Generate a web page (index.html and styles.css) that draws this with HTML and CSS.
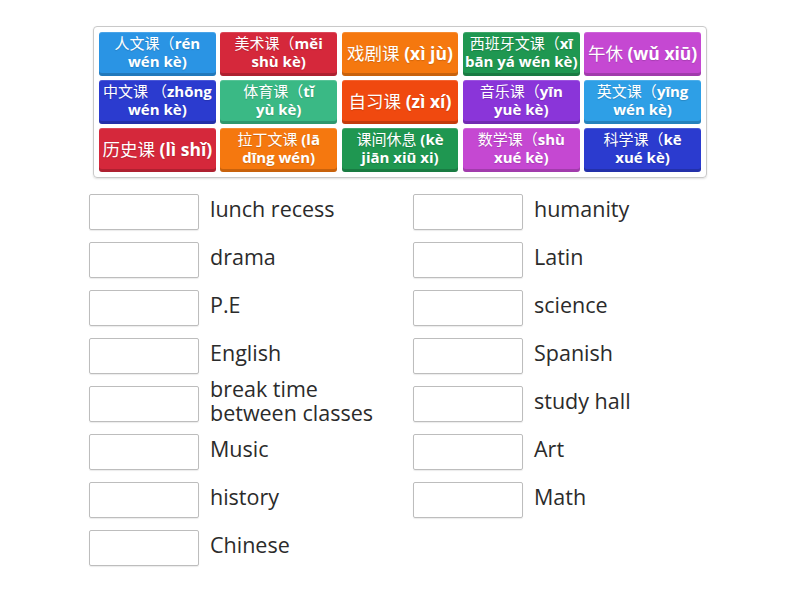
FILE: index.html
```html
<!DOCTYPE html>
<html>
<head>
<meta charset="utf-8">
<link rel="stylesheet" href="styles.css">
</head>
<body>
<div class="page">
  <div class="bank">
    <div class="tile c-blue"><span class="t"><span class="zh">人文课（</span>rén<br>wén kè)</span></div>
    <div class="tile c-red"><span class="t"><span class="zh">美术课（</span>měi<br>shù kè)</span></div>
    <div class="tile c-orange big"><span class="t"><span class="zh">戏剧课</span> (xì jù)</span></div>
    <div class="tile c-green"><span class="t"><span class="zh">西班牙文课（</span>xī<br>bān yá wén kè)</span></div>
    <div class="tile c-magenta big"><span class="t"><span class="zh">午休</span> (wǔ xiū)</span></div>
    <div class="tile c-navy"><span class="t"><span class="zh">中文课 （</span>zhōng<br>wén kè)</span></div>
    <div class="tile c-teal"><span class="t"><span class="zh">体育课（</span>tǐ<br>yù kè)</span></div>
    <div class="tile c-redorange big"><span class="t"><span class="zh">自习课</span> (zì xí)</span></div>
    <div class="tile c-purple"><span class="t"><span class="zh">音乐课（</span>yīn<br>yuè kè)</span></div>
    <div class="tile c-sky"><span class="t"><span class="zh">英文课（</span>yīng<br>wén kè)</span></div>
    <div class="tile c-red big"><span class="t"><span class="zh">历史课</span> (lì shǐ)</span></div>
    <div class="tile c-orange"><span class="t"><span class="zh">拉丁文课</span> (lā<br>dīng wén)</span></div>
    <div class="tile c-green"><span class="t"><span class="zh">课间休息</span> (kè<br>jiān xiū xi)</span></div>
    <div class="tile c-magenta"><span class="t"><span class="zh">数学课（</span>shù<br>xué kè)</span></div>
    <div class="tile c-navy"><span class="t"><span class="zh">科学课（</span>kē<br>xué kè)</span></div>
  </div>
  <div class="targets">
    <div class="col">
      <div class="row"><div class="slot"></div><div class="label">lunch recess</div></div>
      <div class="row"><div class="slot"></div><div class="label">drama</div></div>
      <div class="row"><div class="slot"></div><div class="label">P.E</div></div>
      <div class="row"><div class="slot"></div><div class="label">English</div></div>
      <div class="row"><div class="slot"></div><div class="label">break time between classes</div></div>
      <div class="row"><div class="slot"></div><div class="label">Music</div></div>
      <div class="row"><div class="slot"></div><div class="label">history</div></div>
      <div class="row"><div class="slot"></div><div class="label">Chinese</div></div>
    </div>
    <div class="col">
      <div class="row"><div class="slot"></div><div class="label">humanity</div></div>
      <div class="row"><div class="slot"></div><div class="label">Latin</div></div>
      <div class="row"><div class="slot"></div><div class="label">science</div></div>
      <div class="row"><div class="slot"></div><div class="label">Spanish</div></div>
      <div class="row"><div class="slot"></div><div class="label">study hall</div></div>
      <div class="row"><div class="slot"></div><div class="label">Art</div></div>
      <div class="row"><div class="slot"></div><div class="label">Math</div></div>
    </div>
  </div>
</div>
</body>
</html>
```
FILE: styles.css
```css
html, body {
  margin: 0;
  padding: 0;
  background: #ffffff;
}
body {
  font-family: "Open Sans", "Noto Sans CJK SC", sans-serif;
  width: 800px;
  height: 600px;
  overflow: hidden;
}
.page {
  padding-top: 26px;
}
.bank {
  width: 602px;
  margin-left: 93px;
  border: 1px solid #c9c9c9;
  border-radius: 4px;
  box-shadow: 0 1px 2px rgba(0,0,0,0.12);
  padding: 5px;
  display: grid;
  grid-template-columns: repeat(5, 1fr);
  grid-auto-rows: 44px;
  gap: 4px 4.5px;
}
.tile {
  border-radius: 3px;
  color: #fff;
  font-weight: 700;
  font-size: 15px;
  line-height: 18px;
  display: flex;
  align-items: center;
  justify-content: center;
  text-align: center;
  padding: 0 2px 4px;
  box-sizing: border-box;
  white-space: nowrap;
  box-shadow: inset 0 -3px 0 rgba(0,0,0,0.18), inset 0 1px 0 rgba(255,255,255,0.15);
  text-shadow: 0 1px 1px rgba(0,0,0,0.15);
}
.tile .zh {
  font-weight: 400;
}
.tile.big {
  font-size: 17.5px;
  padding: 0 2px 3px;
}
.c-blue { background: #2a94e4; }
.c-red { background: #d5283b; }
.c-orange { background: #f5780f; }
.c-green { background: #1f9751; }
.c-magenta { background: #c548d2; }
.c-navy { background: #2b3bcf; }
.c-teal { background: #3ab985; }
.c-redorange { background: #f0490f; }
.c-purple { background: #8a35d9; }
.c-sky { background: #2e9fe6; }
.targets {
  display: flex;
  margin-top: 16px;
  margin-left: 89px;
}
.col {
  width: 324px;
  display: flex;
  flex-direction: column;
  gap: 12px;
}
.row {
  display: flex;
  align-items: center;
  height: 36px;
}
.slot {
  width: 110px;
  height: 36px;
  box-sizing: border-box;
  border: 1px solid #bdbdbd;
  border-radius: 2px;
  box-shadow: 0 1px 1px rgba(0,0,0,0.08);
  flex: none;
}
.label {
  margin-left: 11px;
  font-size: 21.5px;
  line-height: 24px;
  color: #2b2b2b;
  width: 190px;
  margin-top: -6px;
}
```
